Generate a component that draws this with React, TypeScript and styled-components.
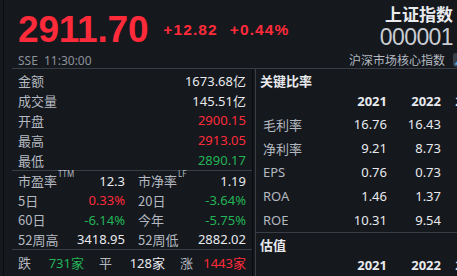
import React from 'react';
import styled, { createGlobalStyle } from 'styled-components';

const Global = createGlobalStyle`
  html, body { margin: 0; padding: 0; background: #15181d; }
  body { font-family: "Noto Sans", "Noto Sans CJK SC", sans-serif; }
`;

const RED = '#ff2b3b';
const GREEN = '#22b457';
const WHITE = '#e8eaee';
const LABEL = '#b4b8c0';
const LINE = '#393d45';

const Root = styled.div`
  width: 457px;
  height: 276px;
  overflow: hidden;
  background: #15181d;
  padding-left: 3px;
  box-sizing: border-box;
`;

const Frame = styled.div`
  height: 100%;
  border-left: 1px solid #0c0d10;
  padding-left: 8px;
  display: flex;
  flex-direction: column;
`;

const Header = styled.div`
  height: 69px;
  box-sizing: border-box;
  border-bottom: 1px solid ${LINE};
  display: flex;
  justify-content: space-between;
  flex-shrink: 0;
`;

const QuoteCol = styled.div`
  display: flex;
  flex-direction: column;
  padding-left: 6px;
`;

const PriceRow = styled.div`
  display: flex;
  align-items: center;
  padding-top: 12px;
`;

const Price = styled.div`
  font-family: "Liberation Sans", sans-serif;
  font-weight: 700;
  font-size: 37px;
  line-height: 36px;
  color: ${RED};
  letter-spacing: -0.2px;
  margin-right: 15px;
`;

const Change = styled.div`
  font-family: "Liberation Sans", sans-serif;
  font-weight: 700;
  font-size: 15.5px;
  line-height: 18px;
  color: ${RED};
  letter-spacing: 1.1px;
  margin-right: 12px;
`;

const TimeRow = styled.div`
  margin-top: 6px;
  font-size: 12px;
  line-height: 14px;
  color: #8c919a;
  word-spacing: 3px;
`;

const NameCol = styled.div`
  display: flex;
  flex-direction: column;
  align-items: flex-end;
  padding-right: 4px;
`;

const Name = styled.div`
  font-family: "Noto Sans CJK SC", sans-serif;
  font-weight: 700;
  font-size: 17px;
  line-height: 20px;
  margin-top: 4px;
  color: ${WHITE};
`;

const Code = styled.div`
  font-family: "Liberation Sans", sans-serif;
  font-size: 23px;
  line-height: 24px;
  color: #c9cdd4;
  letter-spacing: -0.6px;
  margin-top: 1px;
`;

const Desc = styled.div`
  display: flex;
  align-items: center;
  gap: 8px;
  margin-right: -14px;
  margin-top: 3px;
  font-family: "Noto Sans CJK SC", sans-serif;
  font-size: 12px;
  line-height: 16px;
  color: ${LABEL};
`;

const Body = styled.div`
  flex: 1;
  display: flex;
  min-height: 0;
`;

const LeftPanel = styled.div`
  width: 241px;
  flex-shrink: 0;
  border-right: 1px solid #08090b;
  display: flex;
  flex-direction: column;
  padding: 1px 6px 0;
  box-sizing: border-box;
`;

const Gutter = styled.div`
  width: 2px;
  flex-shrink: 0;
  border-right: 1px solid ${LINE};
`;

const Section = styled.div`
  display: flex;
  flex-direction: column;
  border-bottom: 1px solid ${LINE};
  margin: 0 -6px;
  padding: 0 6px;
`;

const Row = styled.div`
  height: 20px;
  display: flex;
  align-items: center;
  justify-content: space-between;
  font-size: 13px;
`;

const Label = styled.span`
  font-family: "Noto Sans CJK SC", sans-serif;
  color: ${LABEL};
  display: flex;
  align-items: flex-start;
`;

const Sup = styled.sup`
  font-family: "Noto Sans", sans-serif;
  font-size: 8px;
  line-height: 8px;
  vertical-align: top;
  margin-left: 1px;
  margin-top: -1px;
`;

const Value = styled.span<{ $c?: string }>`
  color: ${(p) => p.$c || WHITE};
`;

const QuadRow = styled.div`
  height: 19.5px;
  display: grid;
  grid-template-columns: 107px 121px;
  align-items: center;
  font-size: 13px;
`;

const Pair = styled.div<{ $indent?: boolean }>`
  display: flex;
  justify-content: space-between;
  align-items: center;
  padding-left: ${(p) => (p.$indent ? 13 : 0)}px;
`;

const TriRow = styled.div`
  height: 24px;
  display: grid;
  grid-template-columns: repeat(3, 66px);
  column-gap: 15px;
  align-items: center;
  font-size: 13px;
`;

const RightPanel = styled.div`
  flex: 1;
  min-width: 0;
  overflow: hidden;
  display: flex;
  flex-direction: column;
`;

const Title = styled.div<{ $h: number }>`
  font-family: "Noto Sans CJK SC", sans-serif;
  font-weight: 700;
  font-size: 13px;
  color: ${WHITE};
  height: ${(p) => p.$h}px;
  display: flex;
  align-items: center;
  padding-left: 4px;
  padding-top: 2px;
  box-sizing: border-box;
`;

const Table = styled.div<{ $divider?: boolean }>`
  display: flex;
  flex-direction: column;
  ${(p) => (p.$divider ? `border-bottom: 1px solid ${LINE};` : '')}
`;

const TRow = styled.div<{ $head?: boolean }>`
  height: ${(p) => (p.$head ? 22 : 24)}px;
  display: grid;
  grid-template-columns: 70px 54px 54px 44px;
  align-items: center;
  padding-left: 7px;
  font-size: 13px;
  font-weight: ${(p) => (p.$head ? 700 : 400)};
  color: ${WHITE};
  white-space: nowrap;
`;

const TLabel = styled.span`
  font-family: "Noto Sans", "Noto Sans CJK SC", sans-serif;
  color: ${LABEL};
`;

const TNum = styled.span`
  text-align: right;
`;

const Pencil = () => (
  <svg width="14" height="14" viewBox="0 0 14 14">
    <rect x="0" y="0" width="14" height="14" rx="3" fill="#3a4049" />
    <path d="M3 11 L10 4" stroke="#39a7f0" strokeWidth="2.2" strokeLinecap="round" />
  </svg>
);

const ratios = [
  ['毛利率', '16.76', '16.43'],
  ['净利率', '9.21', '8.73'],
  ['EPS', '0.76', '0.73'],
  ['ROA', '1.46', '1.37'],
  ['ROE', '10.31', '9.54'],
];

export default function App() {
  return (
    <>
      <Global />
      <Root>
        <Frame>
          <Header>
            <QuoteCol>
              <PriceRow>
                <Price>2911.70</Price>
                <Change>+12.82</Change>
                <Change>+0.44%</Change>
              </PriceRow>
              <TimeRow>SSE 11:30:00</TimeRow>
            </QuoteCol>
            <NameCol>
              <Name>上证指数</Name>
              <Code>000001</Code>
              <Desc>
                沪深市场核心指数
                <Pencil />
              </Desc>
            </NameCol>
          </Header>
          <Body>
            <LeftPanel>
              <Section>
                <Row><Label>金额</Label><Value>1673.68亿</Value></Row>
                <Row><Label>成交量</Label><Value>145.51亿</Value></Row>
                <Row><Label>开盘</Label><Value $c={RED}>2900.15</Value></Row>
                <Row><Label>最高</Label><Value $c={RED}>2913.05</Value></Row>
                <Row><Label>最低</Label><Value $c={GREEN}>2890.17</Value></Row>
              </Section>
              <Section>
                <QuadRow>
                  <Pair><Label>市盈率<Sup>TTM</Sup></Label><Value>12.3</Value></Pair>
                  <Pair $indent><Label>市净率<Sup>LF</Sup></Label><Value>1.19</Value></Pair>
                </QuadRow>
                <QuadRow>
                  <Pair><Label>5日</Label><Value $c={RED}>0.33%</Value></Pair>
                  <Pair $indent><Label>20日</Label><Value $c={GREEN}>-3.64%</Value></Pair>
                </QuadRow>
                <QuadRow>
                  <Pair><Label>60日</Label><Value $c={GREEN}>-6.14%</Value></Pair>
                  <Pair $indent><Label>今年</Label><Value $c={GREEN}>-5.75%</Value></Pair>
                </QuadRow>
                <QuadRow>
                  <Pair><Label>52周高</Label><Value>3418.95</Value></Pair>
                  <Pair $indent><Label>52周低</Label><Value>2882.02</Value></Pair>
                </QuadRow>
              </Section>
              <TriRow>
                <Pair><Label>跌</Label><Value $c={GREEN}>731家</Value></Pair>
                <Pair><Label>平</Label><Value>128家</Value></Pair>
                <Pair><Label>涨</Label><Value $c={RED}>1443家</Value></Pair>
              </TriRow>
            </LeftPanel>
            <Gutter />
            <RightPanel>
              <Title $h={23}>关键比率</Title>
              <Table $divider>
                <TRow $head><span /><TNum>2021</TNum><TNum>2022</TNum><TNum>2023</TNum></TRow>
                {ratios.map((r) => (
                  <TRow key={r[0]}>
                    <TLabel>{r[0]}</TLabel>
                    <TNum>{r[1]}</TNum>
                    <TNum>{r[2]}</TNum>
                    <TNum />
                  </TRow>
                ))}
              </Table>
              <Title $h={23}>估值</Title>
              <Table>
                <TRow $head><span /><TNum>2021</TNum><TNum>2022</TNum><TNum>2023</TNum></TRow>
              </Table>
            </RightPanel>
          </Body>
        </Frame>
      </Root>
    </>
  );
}
